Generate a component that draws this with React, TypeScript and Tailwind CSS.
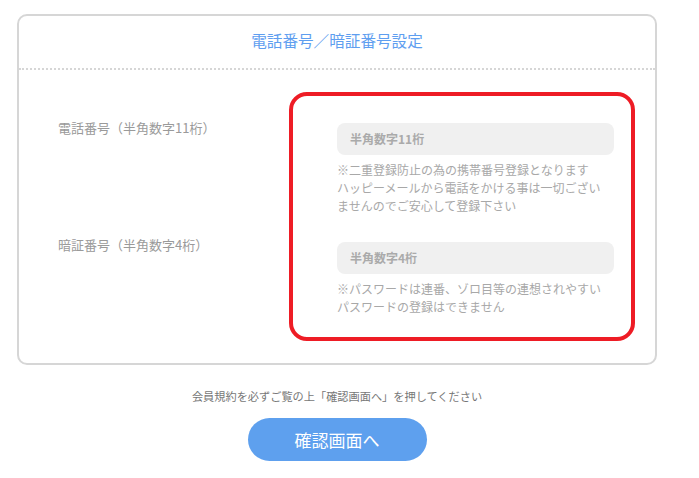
export default function App() {
  return (
    <div
      className="min-h-[478px] w-[699px] bg-white pt-[14px]"
      style={{ fontFamily: '"Noto Sans CJK JP", "Noto Sans", sans-serif' }}
    >
      <div className="mx-[17px] w-[640px] rounded-[10px] border-2 border-[#d6d6d6]">
        <div className="flex h-[54px] items-center justify-center border-b-2 border-dotted border-[#d6d6d6] pb-[2px]">
          <h1 className="text-[15.6px] leading-none text-[#5e9ef0]">
            電話番号／暗証番号設定
          </h1>
        </div>
        <div className="flex pt-[22px] pb-[22px]">
          <div className="w-[270px] pl-[39px] text-[13px] leading-[20px] text-[#9a9a9a]">
            <div className="mt-[26px]">電話番号（半角数字11桁）</div>
            <div className="mt-[97px]">暗証番号（半角数字4桁）</div>
          </div>
          <div className="w-[346px] rounded-[18px] border-4 border-[#ee1c25] pl-[44px] pr-[17px] pt-[27px] pb-[21px]">
            <div className="flex h-[32px] w-[277px] items-center rounded-[8px] bg-[#f0f0f0] px-[13px] text-[12px] font-bold text-[#aaaaaa]">
              半角数字11桁
            </div>
            <p className="mt-[6px] text-[12px] leading-[18px] text-[#a8a8a8]">
              ※二重登録防止の為の携帯番号登録となります
              <br />
              ハッピーメールから電話をかける事は一切ござい
              <br />
              ませんのでご安心して登録下さい
            </p>
            <div className="mt-[27px] flex h-[32px] w-[277px] items-center rounded-[8px] bg-[#f0f0f0] px-[13px] text-[12px] font-bold text-[#aaaaaa]">
              半角数字4桁
            </div>
            <p className="mt-[6px] text-[12px] leading-[18px] text-[#a8a8a8]">
              ※パスワードは連番、ゾロ目等の連想されやすい
              <br />
              パスワードの登録はできません
            </p>
          </div>
        </div>
      </div>
      <div className="mx-[17px] w-[640px]">
        <p className="mt-[23px] text-center text-[11.2px] leading-[16px] text-[#777777]">
          会員規約を必ずご覧の上「確認画面へ」を押してください
        </p>
        <div className="mt-[14px] flex justify-center">
          <button className="flex h-[43px] w-[179px] items-center justify-center rounded-full bg-[#5ea0ee] text-[17px] text-white">
            確認画面へ
          </button>
        </div>
      </div>
    </div>
  );
}
